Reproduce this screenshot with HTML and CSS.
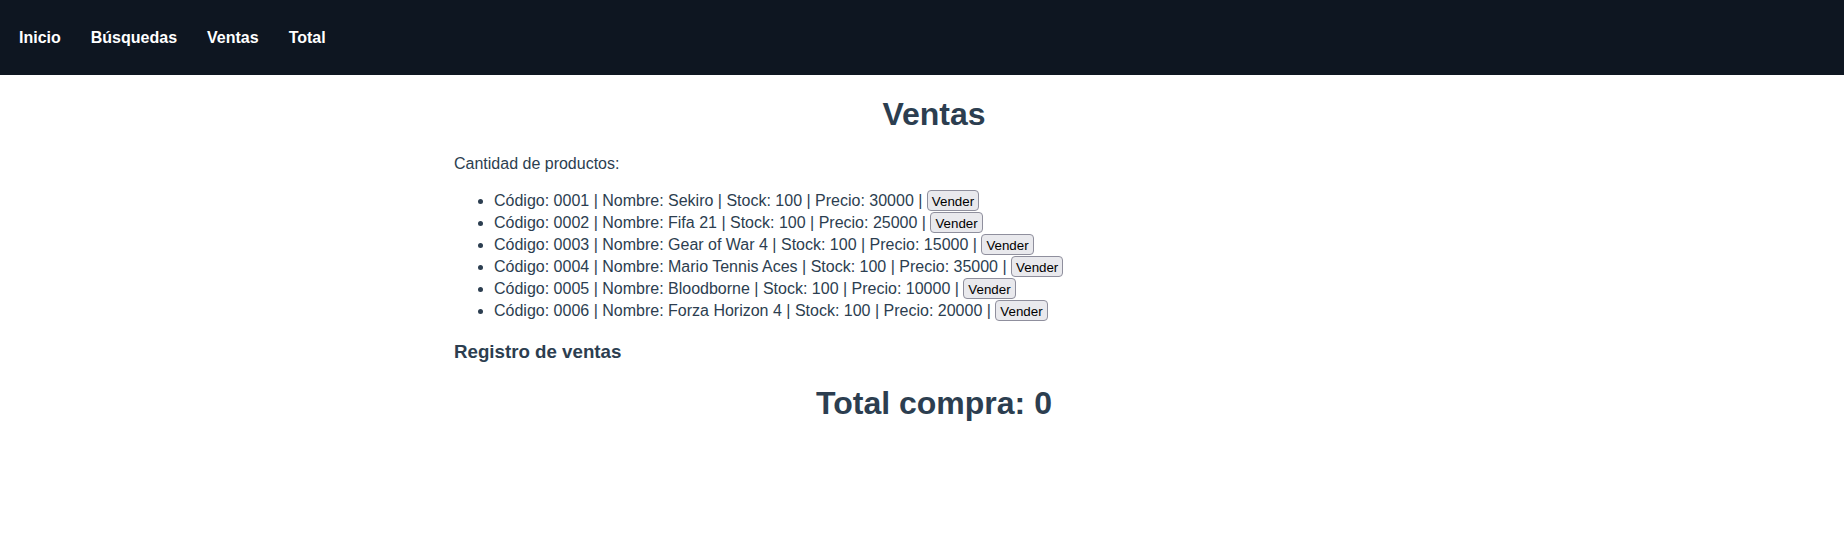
FILE: index.html
```html
<!DOCTYPE html>
<html lang="es">
<head>
<meta charset="utf-8">
<title>Ventas</title>
<link rel="stylesheet" href="styles.css">
</head>
<body>
<nav class="topnav">
  <a class="nav-link" href="#">Inicio</a>
  <a class="nav-link" href="#">Búsquedas</a>
  <a class="nav-link" href="#">Ventas</a>
  <a class="nav-link" href="#">Total</a>
</nav>
<main class="page">
  <h1 class="title">Ventas</h1>
  <p class="count">Cantidad de productos:</p>
  <ul class="products">
    <li>Código: 0001 | Nombre: Sekiro | Stock: 100 | Precio: 30000 | <button class="btn">Vender</button></li>
    <li>Código: 0002 | Nombre: Fifa 21 | Stock: 100 | Precio: 25000 | <button class="btn">Vender</button></li>
    <li>Código: 0003 | Nombre: Gear of War 4 | Stock: 100 | Precio: 15000 | <button class="btn">Vender</button></li>
    <li>Código: 0004 | Nombre: Mario Tennis Aces | Stock: 100 | Precio: 35000 | <button class="btn">Vender</button></li>
    <li>Código: 0005 | Nombre: Bloodborne | Stock: 100 | Precio: 10000 | <button class="btn">Vender</button></li>
    <li>Código: 0006 | Nombre: Forza Horizon 4 | Stock: 100 | Precio: 20000 | <button class="btn">Vender</button></li>
  </ul>
  <h3 class="subtitle">Registro de ventas</h3>
  <h2 class="total">Total compra: 0</h2>
</main>
</body>
</html>
```

FILE: styles.css
```css
html, body {
  margin: 0;
  padding: 0;
  background: #ffffff;
}

body {
  font-family: "Liberation Sans", Arial, Helvetica, sans-serif;
  font-size: 16px;
  color: #2c3e50;
}

.topnav {
  display: flex;
  align-items: center;
  height: 75px;
  padding: 0 4px;
  background: #0e1621;
}

.nav-link {
  padding: 0 15px;
  color: #ffffff;
  font-weight: bold;
  font-size: 16px;
  text-decoration: none;
}

.page {
  max-width: 960px;
  margin: 0 auto;
  padding-left: 24px;
  box-sizing: content-box;
}

.title {
  font-size: 32px;
  margin: 21.44px 0;
  text-align: center;
}

.count {
  margin: 16px 0;
}

.products {
  margin: 17px 0 16px;
  padding-left: 40px;
}

.products li {
  line-height: 22px;
}

.btn {
  font-family: "Liberation Sans", Arial, sans-serif;
  font-size: 13.333px;
  line-height: normal;
  color: #000000;
  background: #e9e9ed;
  border: 1px solid #8f8f9d;
  border-radius: 4px;
  padding: 3px 4px 1px;
  margin: 0;
}

.subtitle {
  font-size: 18.72px;
  margin: 18.72px 0;
}

.total {
  font-size: 32px;
  margin: 22.5px 0;
  text-align: center;
}
```
